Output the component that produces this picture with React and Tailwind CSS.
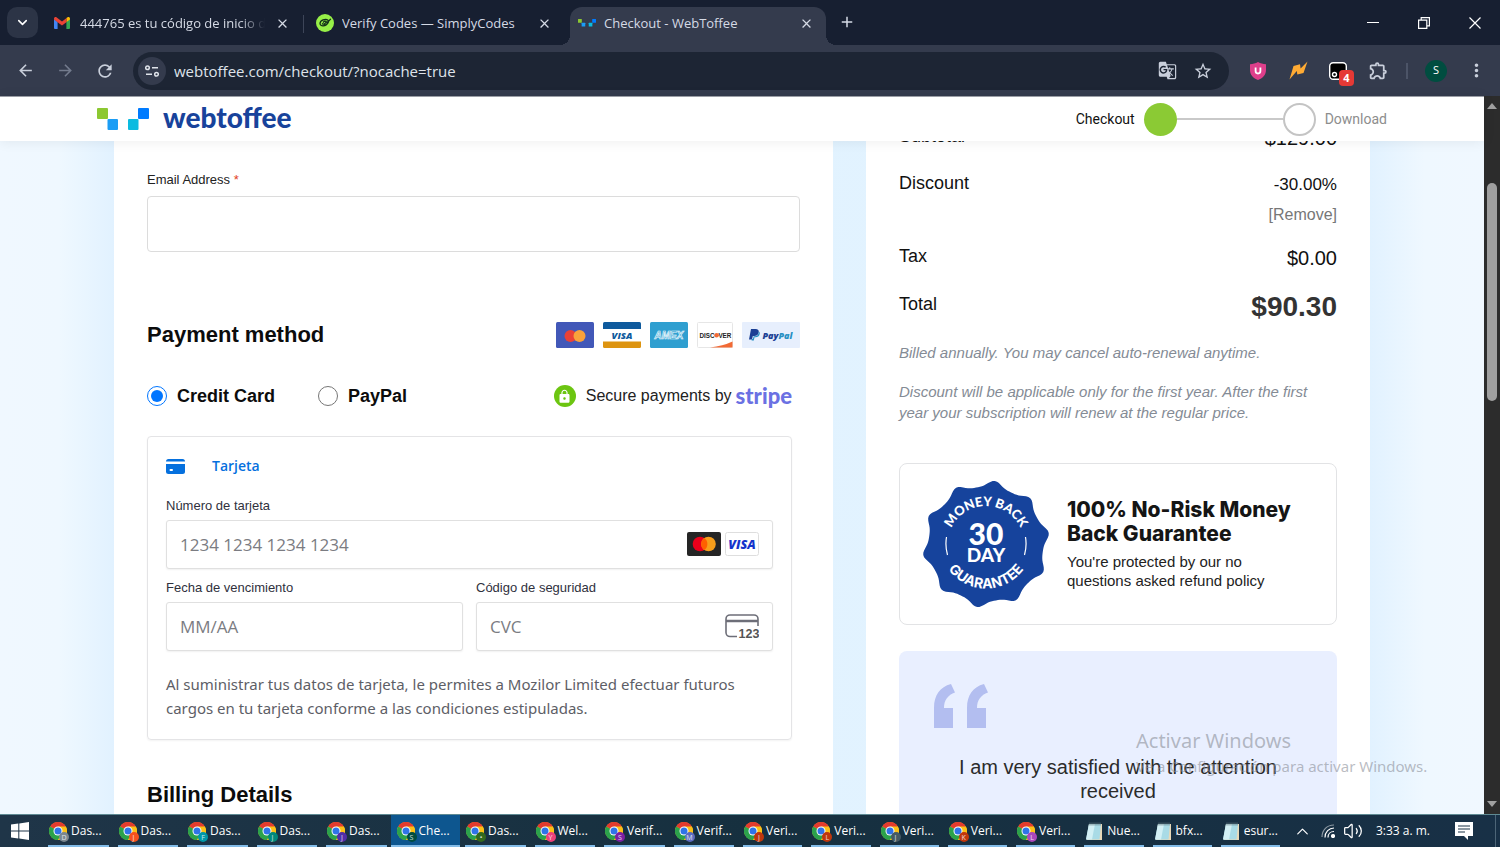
import { ChevronDown, ChevronUp, Volume2 } from "lucide-react";
import {
  MdAdd,
  MdArrowBack,
  MdArrowForward,
  MdClose,
  MdGTranslate,
  MdLock,
  MdMoreVert,
  MdOutlineExtension,
  MdRefresh,
  MdStarBorder,
} from "react-icons/md";

const UI_FONT = "font-['Open_Sans','Noto_Sans',sans-serif]";
const WIDE_UI_FONT = "font-['Noto_Sans',sans-serif]";
const BODY_FONT = "font-['Liberation_Sans',Arial,sans-serif]";

const taskGroups = [
  {
    width: "w-[695px]",
    items: [
      { label: "Das...", badge: "#7a8790", letter: "D" },
      { label: "Das...", badge: "#f4511e", letter: "J" },
      { label: "Das...", badge: "#0097a7", letter: "F" },
      { label: "Das...", badge: "#00897b", letter: "J" },
      { label: "Das...", badge: "#512da8", letter: "J" },
      { label: "Che...", badge: "#004d40", letter: "S", active: true },
      { label: "Das...", badge: "#33691e", letter: "•" },
      { label: "Wel...", badge: "#ec407a", letter: "Y" },
      { label: "Verif...", badge: "#7b1fa2", letter: "S" },
      { label: "Verif...", badge: "#5c6bc0", letter: "M" },
    ],
  },
  {
    width: "w-[546px]",
    items: [
      { label: "Veri...", badge: "#bf360c", letter: "J" },
      { label: "Veri...", badge: "#bf360c", letter: "L" },
      { label: "Veri...", badge: "#455a64", letter: "J" },
      { label: "Veri...", badge: "#bf360c", letter: "K" },
      { label: "Veri...", badge: "#ab47bc", letter: "L" },
      { label: "Nue...", notepad: true },
      { label: "bfx...", notepad: true },
      { label: "esur...", notepad: true },
    ],
  },
];

function ToffeeMark({ className }) {
  return (
    <svg viewBox="0 0 52 22" className={className} aria-hidden="true">
      <rect x="0" y="0" width="11" height="11" rx="1" fill="#8cc832" />
      <rect x="10.5" y="11" width="10.5" height="11" rx="1" fill="#1b9df5" />
      <rect x="31" y="11" width="10.5" height="11" rx="1" fill="#0bbbe0" />
      <rect x="41" y="0" width="11" height="11" rx="1" fill="#007bff" />
    </svg>
  );
}

function GmailIcon() {
  return (
    <svg viewBox="0 0 18 12" className="w-[18px] shrink-0" aria-hidden="true">
      <path d="M0 1.8V11a1 1 0 0 0 1 1h2.6V5L0 2z" fill="#4285f4" />
      <path d="M16 1.8V11a1 1 0 0 1-1 1h-2.6V5L16 2z" fill="#34a853" />
      <path d="M12.4 1v4.2L16 2.4v-.8C16 .1 14.4-.4 13.3.4z" fill="#fbbc04" />
      <path d="M0 1.6C0 .1 1.6-.4 2.7.4L8 4.4 13.3.4l-.9.7v4.1L8 8.5 3.600 5.2 0 2.5z" fill="#ea4335" />
    </svg>
  );
}

function SimplyCodesIcon() {
  return (
    <svg viewBox="0 0 18 18" className="w-[18px] shrink-0" aria-hidden="true">
      <circle cx="9" cy="9" r="9" fill="#97f048" />
      <path d="M12 6.3C9.5 4 4 6.5 4 9.600c0 3 5.8 3.2 8.3-1.2M6.5 9.8c1 1 3.2-.2 3.5-1.8.3-1.2-1.600-1.2-2.600.2M10.5 8.2c1.5.3 2.600-1 4-3" fill="none" stroke="#12301a" strokeWidth="1.3" strokeLinecap="round" />
    </svg>
  );
}

function ChromeIcon() {
  return (
    <svg viewBox="0 0 24 24" className="size-[18px]" aria-hidden="true">
      <circle cx="12" cy="12" r="12" fill="#fbc116" />
      <path d="M12 12 1.6 6A12 12 0 0 1 22.4 6z" fill="#e33b2e" />
      <path d="M12 12 1.6 6A12 12 0 0 0 12 24l5.2-9z" fill="#2ba24c" />
      <path d="M12 6h10.4a12 12 0 0 1-10.4 18l5.2-9z" fill="#fbc116" />
      <circle cx="12" cy="12" r="6" fill="#fff" />
      <circle cx="12" cy="12" r="4.7" fill="#2f74e8" />
    </svg>
  );
}

function NotepadIcon() {
  return (
    <svg viewBox="0 0 18 19" className="w-[18px]" aria-hidden="true">
      <path d="M4 2h13v16H2z" fill="#e8d9b8" />
      <path d="M4 2h12l-1.5 15.5H1z" fill="#a9dbe6" />
      <path d="M4 2h6L7 17.5H1z" fill="#d3f0f5" />
      <path d="M5 .5v3M7 .5v3M9 .5v3M11 .5v3M13 .5v3M15 .5v3" stroke="#5f7680" strokeWidth=".9" />
    </svg>
  );
}

function Tab({ icon, title, active, fade }) {
  return (
    <div className={active ? "relative flex h-[38px] w-64 items-center rounded-t-xl bg-[#343b4d] pb-1.5 pl-2 pr-3" : "flex h-[38px] w-[262px] items-center pb-1.5 pl-2 pr-[18px]"}>
      {active && (
        <>
          <span className="absolute -left-2.5 bottom-0 size-2.5 bg-[radial-gradient(circle_at_0_0,transparent_10px,#343b4d_10px)]" />
          <span className="absolute -right-2.5 bottom-0 size-2.5 bg-[radial-gradient(circle_at_100%_0,transparent_10px,#343b4d_10px)]" />
        </>
      )}
      {icon}
      <span className={`ml-2 min-w-0 flex-1 overflow-hidden whitespace-nowrap text-[13px] leading-[18px] text-[#d5dae5] ${fade ? "mr-2.5 [mask-image:linear-gradient(to_right,black_86%,transparent)]" : "mr-2"}`}>{title}</span>
      <button type="button" aria-label="Cerrar pestaña" className="text-[#d5dae5]">
        <MdClose size={15} />
      </button>
    </div>
  );
}

function TabStrip() {
  return (
    <div className="flex h-[45px] shrink-0 items-end bg-[#171f31]">
      <button type="button" aria-label="Buscar pestañas" className="mb-[7px] ml-[7px] flex size-[31px] items-center justify-center rounded-[10px] bg-[#2c3446] text-white">
        <ChevronDown size={15} strokeWidth={2.5} />
      </button>
      <div className="ml-2 flex items-center">
        <Tab icon={<GmailIcon />} title="444765 es tu código de inicio de sesión" fade />
        <span className="-ml-[5px] mb-1 mr-1 h-[18px] w-px bg-[#3d4558]" />
      </div>
      <Tab icon={<SimplyCodesIcon />} title="Verify Codes — SimplyCodes" />
      <Tab icon={<ToffeeMark className="w-[18px] shrink-0" />} title="Checkout - WebToffee" active />
      <button type="button" aria-label="Nueva pestaña" className="mb-[14px] ml-3 text-[#d5dae5]">
        <MdAdd size={18} />
      </button>
      <div className="ml-auto flex h-full text-white">
        <button type="button" aria-label="Minimizar" className="flex w-[51px] items-center justify-center">
          <svg viewBox="0 0 12 12" className="w-3" stroke="currentColor"><path d="M0 5.5h12" /></svg>
        </button>
        <button type="button" aria-label="Restaurar" className="flex w-[51px] items-center justify-center">
          <svg viewBox="0 0 12 12" className="w-3" fill="none" stroke="currentColor" strokeWidth="1.2"><path d="M.6 3.2h8.2v8.2H.6zM3.2 3V.6h8.2v8.2H9" /></svg>
        </button>
        <button type="button" aria-label="Cerrar" className="flex w-[51px] items-center justify-center">
          <svg viewBox="0 0 12 12" className="w-3" stroke="currentColor" strokeWidth="1.2"><path d="m.5.5 11 11m0-11-11 11" /></svg>
        </button>
      </div>
    </div>
  );
}

function Toolbar() {
  const cell = "flex w-10 items-center justify-center";
  return (
    <div className="flex h-[51px] shrink-0 items-center bg-[#343b4d] pl-[5px] pr-1 text-[#c9cfdb]">
      <button type="button" aria-label="Atrás" className={cell}><MdArrowBack size={19} /></button>
      <button type="button" aria-label="Adelante" className={`${cell} text-[#737b8d]`}><MdArrowForward size={19} /></button>
      <button type="button" aria-label="Recargar" className={cell}><MdRefresh size={20} /></button>
      <div className="ml-2 flex h-[38px] flex-1 items-center rounded-full bg-[#1d2534] pl-[5px] pr-2">
        <span className="flex size-7 shrink-0 items-center justify-center rounded-full bg-[#343b4d]">
          <svg viewBox="0 0 14 12" className="w-3.5" fill="none" stroke="#dfe3ea" strokeWidth="1.5" aria-hidden="true">
            <circle cx="2.5" cy="2.8" r="1.8" />
            <path d="M7 2.8h6M1 9.2h6" />
            <circle cx="11.5" cy="9.2" r="1.8" />
          </svg>
        </span>
        <input aria-label="Dirección" defaultValue="webtoffee.com/checkout/?nocache=true" className="ml-2 min-w-0 flex-1 bg-transparent text-[15px] leading-5 text-[#dfe3ea] outline-none" />
        <button type="button" aria-label="Traducir" className="flex w-9 justify-center"><MdGTranslate size={19} /></button>
        <button type="button" aria-label="Favorito" className="flex w-9 justify-center"><MdStarBorder size={20} /></button>
      </div>
      <div className="ml-[9px] flex items-center">
        <button type="button" aria-label="Escudo" className={cell}>
          <svg viewBox="0 0 16 18" className="w-4">
            <path d="M8 0c2.5 1.6 5 2 8 2.2V8c0 5-3.5 8.3-8 10C3.5 16.3 0 13 0 8V2.2C3 2 5.5 1.6 8 0z" fill="#de3f8b" />
            <path d="M5.600 5.500v3.600a2.400 2.400 0 0 0 4.800 0V5.500" fill="none" stroke="#fff" strokeWidth="1.8" />
          </svg>
        </button>
        <button type="button" aria-label="Rayo" className={cell}>
          <svg viewBox="0 0 19 19" className="w-[19px]"><path d="M4.500 5 11 3.300l.6 4.200L18.500.5 14.500 12l-6.200 1.400-.5-3.400L.5 18.500z" fill="#ffab34" /></svg>
        </button>
        <button type="button" aria-label="Extensión, 4 avisos" className={`${cell} relative`}>
          <svg viewBox="0 0 18 18" className="w-[18px]">
            <rect x=".7" y=".7" width="16.6" height="16.6" rx="3.5" fill="#000" stroke="#fff" strokeWidth="1.4" />
            <circle cx="5.5" cy="12.5" r="2" fill="none" stroke="#fff" strokeWidth="1.4" />
          </svg>
          <span className="absolute -bottom-1.5 right-1 flex h-4 w-[15px] items-center justify-center rounded bg-[#e53935] text-[11px] font-bold leading-4 text-white">4</span>
        </button>
        <button type="button" aria-label="Extensiones" className={cell}><MdOutlineExtension size={21} /></button>
        <span className="mx-[8px] h-4 w-0.5 bg-[#4c5467]" />
        <button type="button" className={cell}>
          <span className="flex size-[22px] items-center justify-center rounded-full bg-[#004d40] text-[11px] text-white">S</span>
        </button>
        <button type="button" aria-label="Menú" className={cell}><MdMoreVert size={21} /></button>
      </div>
    </div>
  );
}

function SiteHeader() {
  return (
    <header className="z-10 flex h-[45px] shrink-0 items-center justify-between border-t border-[#9a9da5] bg-white px-[97px] shadow-[0_1px_12px_rgba(0,0,0,0.07)]">
      <a href="#inicio" className="flex items-center gap-3.5">
        <ToffeeMark className="w-[52px]" />
        <span className="-mt-1 font-['Lato',sans-serif] text-[28px] font-black leading-8 text-[#18439b]">webtoffee</span>
      </a>
      <div className="flex items-center font-['Roboto',sans-serif] text-sm">
        <span className="mr-[9px] text-[#111]">Checkout</span>
        <span className="size-[33px] rounded-full bg-[#8bca34]" />
        <span className="h-0.5 w-[106px] bg-[#c9c9c9]" />
        <span className="mr-[9px] size-[33px] rounded-full border-2 border-[#c4c4c4]" />
        <span className="text-[#8d8d8d]">Download</span>
      </div>
    </header>
  );
}

function PaymentLogos() {
  return (
    <div className="flex items-center gap-[9px]">
      <svg viewBox="0 0 38 26" className="w-[38px]" role="img" aria-label="Mastercard">
        <rect width="38" height="26" rx="1.5" fill="#4258b8" />
        <circle cx="14.5" cy="14" r="6" fill="#eb4136" />
        <circle cx="23.5" cy="14" r="6" fill="#f9a23b" />
      </svg>
      <svg viewBox="0 0 38 26" className="w-[38px]" role="img" aria-label="Visa">
        <rect width="38" height="26" rx="1.5" fill="#fff" />
        <path d="M0 1.5Q0 0 1.5 0h35Q38 0 38 1.5V7H0z" fill="#0e5a9d" />
        <path d="M0 19.5h38v5Q38 26 36.5 26h-35Q0 26 0 24.5z" fill="#dd9410" />
        <text x="19" y="16.8" textAnchor="middle" fontFamily="Open Sans" fontSize="9.5" fontWeight="800" fontStyle="italic" fill="#0e5a9d">VISA</text>
      </svg>
      <svg viewBox="0 0 38 26" className="w-[38px]" role="img" aria-label="American Express">
        <rect width="38" height="26" rx="1.5" fill="#2f9fd0" />
        <text x="19" y="16.8" textAnchor="middle" fontFamily="Liberation Sans" fontSize="10" fontWeight="700" fontStyle="italic" fill="#2f9fd0" stroke="#e8f6fc" strokeWidth=".7">AMEX</text>
      </svg>
      <svg viewBox="0 0 36 26" className="w-9" role="img" aria-label="Discover">
        <rect x=".5" y=".5" width="35" height="25" rx="1" fill="#fff" stroke="#e6e6e6" />
        <path d="M35.5 19.5V25.5H13q13-1.5 22.5-6z" fill="#f26a35" />
        <text x="2.5" y="15.6" fontFamily="Liberation Sans" fontSize="6.3" fontWeight="700" fill="#222">DISC</text>
        <circle cx="19.6" cy="13.3" r="2.3" fill="#f26a35" />
        <text x="21.4" y="15.6" fontFamily="Liberation Sans" fontSize="6.3" fontWeight="700" fill="#222">VER</text>
      </svg>
      <svg viewBox="0 0 58 26" className="w-[58px]" role="img" aria-label="PayPal">
        <rect width="58" height="26" rx="1" fill="#e7effd" />
        <path d="M9 7h4.500c2.500 0 3.700 1.400 3.200 3.500-.5 2.400-2.200 3.500-4.600 3.500h-1.300l-.8 3.500H7z" fill="#1b3f94" />
        <path d="M16.900 9.500c.8.600 1 1.500.8 2.600-.5 2.200-2 3.100-4.200 3.100h-1l-.7 3.300H9.600l.3-1.500h1l.8-2.800h1.200c2.200 0 3.700-1.200 4-4.700z" fill="#2790c3" />
        <text x="20.5" y="16.5" fontFamily="Open Sans" fontSize="9" fontWeight="800" fontStyle="italic" fill="#1b3f94">Pay<tspan fill="#2790c3">Pal</tspan></text>
      </svg>
    </div>
  );
}

function CardBrands() {
  return (
    <span className="absolute right-3.5 top-3 flex gap-1">
      <svg viewBox="0 0 34 24" className="w-[34px]" role="img" aria-label="Mastercard">
        <rect width="34" height="24" rx="2" fill="#252525" />
        <circle cx="13" cy="12" r="7.3" fill="#eb001b" />
        <circle cx="21.5" cy="12" r="7.3" fill="#f79e1b" />
        <path d="M17.250 6a7.300 7.300 0 0 1 0 12 7.300 7.300 0 0 1 0-12z" fill="#ff5f00" />
      </svg>
      <svg viewBox="0 0 34 24" className="w-[34px]" role="img" aria-label="Visa">
        <rect x=".5" y=".5" width="33" height="23" rx="2" fill="#fff" stroke="#dedede" />
        <text x="17" y="16.5" textAnchor="middle" fontFamily="Open Sans" fontSize="12.5" fontWeight="800" fontStyle="italic" fill="#1434cb">VISA</text>
      </svg>
    </span>
  );
}

function CvcIcon() {
  return (
    <svg viewBox="0 0 34 24" className="absolute right-3.5 top-3 w-[34px]" aria-hidden="true">
      <path d="M12 22.500H5A4 4 0 0 1 1 18.500V5a4 4 0 0 1 4-4h24a4 4 0 0 1 4 4v7" fill="none" stroke="#6d6e78" strokeWidth="1.6" />
      <path d="M1 7h32" stroke="#6d6e78" strokeWidth="2.5" />
      <text x="13.5" y="23.500" fontFamily="Liberation Sans" fontSize="12.500" fontWeight="700" fill="#555">123</text>
    </svg>
  );
}

function StripeField({ id, label, placeholder, children }) {
  return (
    <div>
      <label htmlFor={id} className="block text-[13px] leading-5 text-[#30313d]">{label}</label>
      <div className="relative mt-1">
        <input id={id} placeholder={placeholder} className={`${UI_FONT} h-[49px] w-full rounded-[3px] border border-[#e0e0e0] bg-white px-[13px] text-[17px] shadow-[0_1px_2px_rgba(0,0,0,0.06)] outline-none placeholder:text-[#7b7c82]`} />
        {children}
      </div>
    </div>
  );
}

function PaymentForm() {
  return (
    <section className="flex-1 bg-white px-[33px] pt-[29px]">
      <label htmlFor="email" className="block text-[13px] leading-5 text-[#222]">
        Email Address <span className="text-[#e2401c]">*</span>
      </label>
      <input id="email" type="email" className="mt-1.5 h-14 w-full rounded-sm border border-[#dcdcdc] px-4 outline-none" />

      <div className="mt-[67px] flex items-center justify-between">
        <h2 className="text-[22px] font-bold leading-8 text-[#0c0c0c]">Payment method</h2>
        <PaymentLogos />
      </div>

      <div className="mr-2 mt-[31px] flex h-7 items-center">
        <label className="flex items-center gap-2.5 text-lg font-bold text-[#0c0c0c]">
          <input type="radio" name="method" defaultChecked className="size-5 accent-[#0075ff]" />
          Credit Card
        </label>
        <label className="ml-[43px] flex items-center gap-2.5 text-lg font-bold text-[#0c0c0c]">
          <input type="radio" name="method" className="size-5" />
          PayPal
        </label>
        <div className="ml-auto flex items-center text-[#222]">
          <span className="mr-2.5 flex size-[22px] items-center justify-center rounded-full bg-[#6cc511] text-white">
            <MdLock size={15} />
          </span>
          <span className="text-base leading-6">Secure payments by</span>
          <span className="ml-1 font-['Lato',sans-serif] text-[22px] font-black leading-6 text-[#6b71e3]">stripe</span>
        </div>
      </div>

      <div className="mr-2 mt-[26px] rounded-sm border border-[#e4e4e6] px-[18px] pb-[19px] pt-[17px] shadow-[0_1px_2px_rgba(0,0,0,0.05)]">
        <div className="flex h-6 items-center gap-[27px]">
          <svg viewBox="0 0 19 15" className="w-[19px]" aria-hidden="true">
            <path d="M0 2.500Q0 0 2.500 0h14Q19 0 19 2.500z" fill="#0570de" />
            <path d="M0 5h19v7.500q0 2.500-2.500 2.500h-14Q0 15 0 12.500z" fill="#0570de" />
            <rect x="3.5" y="10" width="3.5" height="2" rx="1" fill="#fff" />
          </svg>
          <span className={`${UI_FONT} text-sm font-semibold text-[#0570de]`}>Tarjeta</span>
        </div>
        <div className="mt-[18px]">
          <StripeField id="card" label="Número de tarjeta" placeholder="1234 1234 1234 1234">
            <CardBrands />
          </StripeField>
        </div>
        <div className="mt-[9px] grid grid-cols-2 gap-[13px]">
          <StripeField id="expiry" label="Fecha de vencimiento" placeholder="MM/AA" />
          <StripeField id="cvc" label="Código de seguridad" placeholder="CVC">
            <CvcIcon />
          </StripeField>
        </div>
        <p className={`${WIDE_UI_FONT} mt-[21px] text-[15px] leading-6 text-[#5d5e66]`}>
          Al suministrar tus datos de tarjeta, le permites a Mozilor Limited efectuar futuros cargos en tu tarjeta conforme a las condiciones estipuladas.
        </p>
      </div>

      <h2 className="mt-[39px] text-[22px] font-bold leading-8 text-[#0c0c0c]">Billing Details</h2>
    </section>
  );
}

// ten soft scallops around the badge edge
const sealPoints = Array.from({ length: 180 })
  .map((_, i) => {
    const a = (i * 2 * Math.PI) / 180;
    const phase = 10 * (a + (10 * Math.PI) / 180);
    const r = 60.5 + 3.2 * Math.cos(phase + 0.45 * Math.sin(phase));
    return `${(64 + r * Math.cos(a)).toFixed(2)},${(64 + r * Math.sin(a)).toFixed(2)}`;
  })
  .join(" ");

function MoneyBackSeal() {
  return (
    <svg viewBox="0 0 128 128" className="w-32 shrink-0" role="img" aria-label="Money back 30 day guarantee">
      <defs>
        <path id="seal-top" d="M26 64a38 38 0 0 1 76 0" />
        <path id="seal-bottom" d="M17.500 62a46.500 46.500 0 0 0 93 0" />
      </defs>
      <polygon points={sealPoints} fill="#16439c" />
      <g fill="#fff" fontFamily="Lato" fontWeight="900" textAnchor="middle">
        <text fontSize="13"><textPath href="#seal-top" startOffset="50%">MONEY BACK</textPath></text>
        <text fontSize="14" fontFamily="Inter" fontWeight="700"><textPath href="#seal-bottom" startOffset="50%">GUARANTEE</textPath></text>
        <text x="64" y="65" fontSize="30">30</text>
        <text x="64" y="82" fontSize="19">DAY</text>
      </g>
      <path d="M24.500 57a41 41 0 0 0 1 18M103.500 57a41 41 0 0 1-1 18" fill="none" stroke="#fff" strokeWidth="1.2" />
    </svg>
  );
}

function SummaryRow({ label, children }) {
  return (
    <div className="flex items-start justify-between leading-7 text-[#111]">
      <span className="text-lg leading-6">{label}</span>
      {children}
    </div>
  );
}

function OrderSummary() {
  return (
    <aside className="w-[504px] shrink-0 bg-white px-[33px]">
      <div className="-mt-[17px]">
        <SummaryRow label="Subtotal"><span className="text-xl leading-7">$129.00</span></SummaryRow>
      </div>
      <div className="mt-[19px]">
        <SummaryRow label="Discount">
          <div className="flex flex-col items-end">
            <span className="text-[17px]">-30.00%</span>
            <a href="#quitar" className="mt-0.5 text-base leading-7 text-[#777]">[Remove]</a>
          </div>
        </SummaryRow>
      </div>
      <div className="mt-[15px]">
        <SummaryRow label="Tax"><span className="text-xl leading-7">$0.00</span></SummaryRow>
      </div>
      <div className="mt-5">
        <SummaryRow label="Total"><strong className="text-[28px] leading-[30px] text-[#333]">$90.30</strong></SummaryRow>
      </div>

      <div className="mt-5 text-[15px] italic leading-[21px] text-[#848b95]">
        <p>Billed annually. You may cancel auto-renewal anytime.</p>
        <p className="mt-[18px]">Discount will be applicable only for the first year. After the first year your subscription will renew at the regular price.</p>
      </div>

      <div className="mt-10 flex h-[162px] items-center gap-[17px] rounded-lg border border-[#e2e3e5] pl-[22px] pr-4">
        <MoneyBackSeal />
        <div>
          <h3 className="font-['Inter',sans-serif] text-[21px] font-extrabold leading-6 text-[#151515]">100% No-Risk Money Back Guarantee</h3>
          <p className="mt-1.5 text-[15px] leading-[19px] text-[#222]">
            You're protected by our no
            <br />
            questions asked refund policy
          </p>
        </div>
      </div>

      <figure className="mt-[26px] h-[200px] rounded-lg bg-[#e9efff] px-[35px] pt-[33px]">
        <svg viewBox="0 0 54 44" className="w-[54px]" aria-hidden="true">
          <path d="M0 44V24C0 11 6 3 17 0l4 8.500C14 11 10 16 10 24h9v20z" fill="#b3bef0" />
          <path d="M33 44V24C33 11 39 3 50 0l4 8.500C47 11 43 16 43 24h9v20z" fill="#b3bef0" />
        </svg>
        <blockquote className="mt-[27px] text-center text-xl leading-6 text-[#2b2b2b]">
          I am very satisfied with the attention
          <br />
          received
        </blockquote>
      </figure>
    </aside>
  );
}

function PageScrollbar() {
  return (
    <div className="flex w-4 shrink-0 flex-col items-center bg-[#2c2c2c] py-[7px]" aria-hidden="true">
      <svg viewBox="0 0 10 6" className="w-2.5"><path d="M5 0l5 6H0z" fill="#a0a0a0" /></svg>
      <span className="mt-[74px] h-[218px] w-2.5 rounded-full bg-[#9f9f9f]" />
      <svg viewBox="0 0 10 6" className="mt-auto w-2.5"><path d="M0 0h10L5 6z" fill="#a0a0a0" /></svg>
    </div>
  );
}

function TaskButton({ item }) {
  return (
    <button type="button" className={`relative flex h-full min-w-0 flex-1 items-center pl-1.5 ${item.active ? "bg-[#0d568f]" : ""}`}>
      <span className="relative shrink-0">
        {item.notepad ? <NotepadIcon /> : <ChromeIcon />}
        {!item.notepad && (
          <span className="absolute -bottom-0.5 -right-0.5 flex size-[10px] items-center justify-center rounded-full text-[7px] leading-none text-white/80" style={{ backgroundColor: item.badge }}>
            {item.letter}
          </span>
        )}
      </span>
      <span className="ml-1 whitespace-nowrap text-xs text-white">{item.label}</span>
      <span className={`absolute bottom-0 h-0.5 bg-[#83bce8] ${item.active ? "inset-x-0" : "left-[5px] right-1"}`} />
    </button>
  );
}

function Taskbar() {
  return (
    <footer className="flex h-[33px] shrink-0 items-center border-t border-[#5f8a93] bg-linear-to-r from-[#1f3548] via-[#16303f] to-[#183046] text-white">
      <button type="button" aria-label="Inicio" className="flex w-[43px] justify-center pr-[3px]">
        <svg viewBox="0 0 18 18" className="w-[18px]" fill="#fff">
          <path d="M0 2.600 7.300 1.500v7H0zM8.300 1.400 18 0v8.500H8.300zM0 9.500h7.300v7L0 15.400zM8.300 9.500H18V18l-9.700-1.400z" />
        </svg>
      </button>
      {taskGroups.map((group) => (
        <div key={group.width} className={`flex h-full min-w-0 ${group.width}`}>
          {group.items.map((item, i) => (
            <TaskButton key={i} item={item} />
          ))}
        </div>
      ))}
      <div className="ml-auto flex h-full items-center">
        <ChevronUp size={19} strokeWidth={1.5} className="mr-[9px]" />
        <svg viewBox="0 0 14 14" className="mr-2 w-3.5" fill="none" stroke="#fff" strokeWidth="1.2" aria-hidden="true">
          <path d="M1 13C1 6 6 1 13 1" opacity=".5" />
          <path d="M4 13.500C4 8 8 4 13 4M7 13.500c0-3.500 2.500-6 6-6" />
          <circle cx="12" cy="12" r="1.5" fill="#fff" />
        </svg>
        <Volume2 size={20} strokeWidth={1.5} className="mr-[13px]" />
        <time className="mr-[25px] whitespace-nowrap text-xs">3:33 a. m.</time>
        <svg viewBox="0 0 18 18" className="mr-[22px] w-[18px]" aria-hidden="true">
          <path d="M0 0h18v14h-5v4l-4-4H0z" fill="#fff" />
          <path d="M3 4h12M3 7h12M3 10h7" stroke="#1b3347" strokeWidth="1.2" />
        </svg>
        <span className="mr-1 h-full w-px bg-[#4d6577]" />
      </div>
    </footer>
  );
}

export default function App() {
  return (
    <div className={`${UI_FONT} relative flex h-screen flex-col overflow-hidden bg-white`}>
      <TabStrip />
      <Toolbar />
      <div className="flex min-h-0 flex-1">
        <div className={`${BODY_FONT} flex min-w-0 flex-1 flex-col`}>
          <SiteHeader />
          <main className="min-h-0 flex-1 overflow-hidden bg-[linear-gradient(to_right,#f0f8ff,#eff8ff_4%,#e0f1ff_8%,#e2f3ff_50%,#e0f1ff_92%,#eff8ff_96%,#f0f8ff)]">
            <div className="mx-auto flex h-full w-full max-w-[1256px] gap-[33px]">
              <PaymentForm />
              <OrderSummary />
            </div>
          </main>
        </div>
        <PageScrollbar />
      </div>
      <Taskbar />

      {/* Windows activation notice */}
      <div className={`${WIDE_UI_FONT} pointer-events-none absolute bottom-[70px] right-[60px] w-[304px] whitespace-nowrap text-[#8c8f99]/60`}>
        <p className="text-xl leading-7">Activar Windows</p>
        <p className="text-[15px] leading-[22px]">Ve a Configuración para activar Windows.</p>
      </div>
    </div>
  );
}
